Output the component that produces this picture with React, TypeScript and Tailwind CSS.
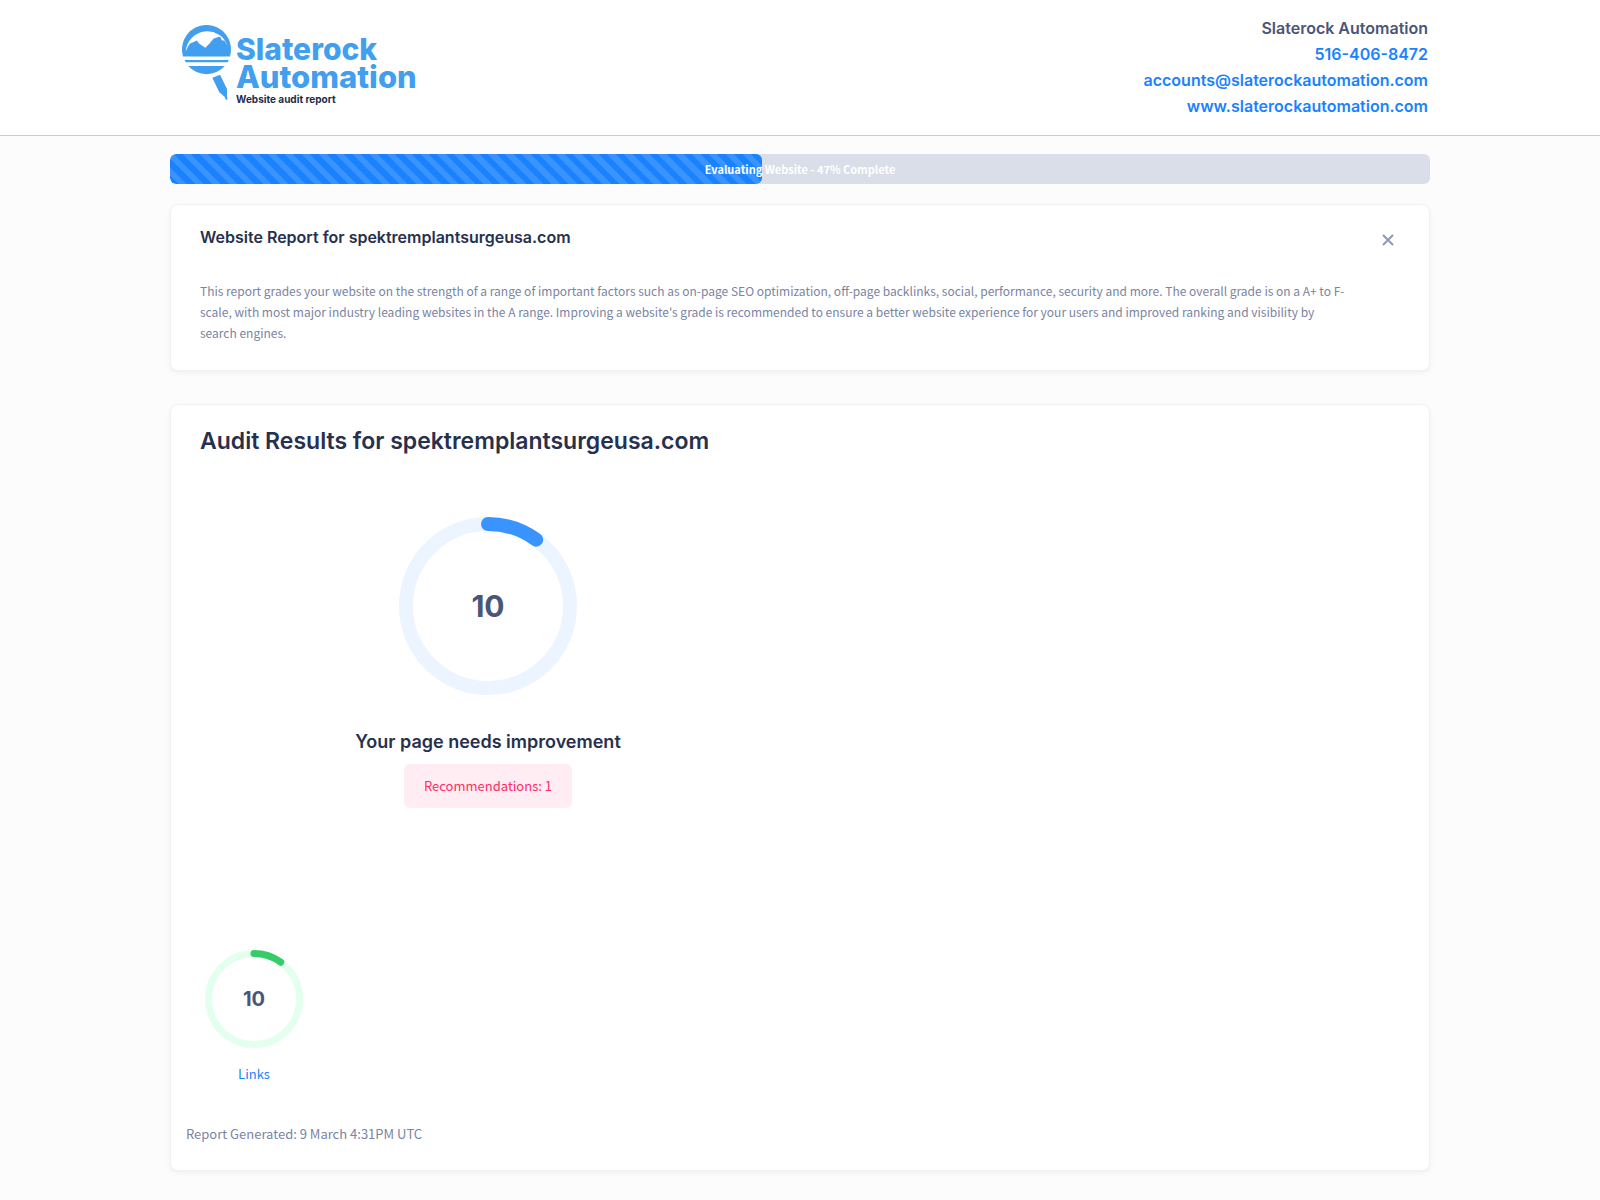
import { type ReactNode } from 'react'

const SITE = 'spektremplantsurgeusa.com'

const CONTACT_LINKS = [
  { label: '516-406-8472', href: 'tel:5164068472' },
  { label: 'accounts@slaterockautomation.com', href: 'mailto:accounts@slaterockautomation.com' },
  { label: 'www.slaterockautomation.com', href: '#website' },
]

// ── Atoms ─────────────────────────────────────────────────────────────────────

function LogoMark() {
  return (
    <svg className="h-20 w-[50px] shrink-0" viewBox="0 0 50 80" fill="#429ff0" aria-hidden="true">
      <path
        fillRule="evenodd"
        d="M1 31.4A24.5 24.5 0 1 1 48 31.4ZM3.8 26.2L6.2 21L8 18.4L11.2 17.2L14.7 15.6L17 18.4L23.3 22.8L28 18L31.3 13.8L37 11.7L38.6 12.2L39.8 15.2L42.6 15.8L45.6 20.8A21.5 21.5 0 0 0 3.8 26.2Z"
      />
      <path d="M2.500 35H46.800L45.600 37.200H3.800Z" />
      <path d="M6.200 41H42.800A24.500 24.500 0 0 1 6.200 41Z" />
      <path d="M30.300 52.700L38 49.700L45 64V71.500L45.400 74.800L43.600 74.400L42.600 71.800L37.300 67.300Z" />
    </svg>
  )
}

interface GaugeProps {
  value: number
  size: number
  stroke: number
  trackClass: string
  barClass: string
  labelClass: string
}

function Gauge({ value, size, stroke, trackClass, barClass, labelClass }: GaugeProps) {
  const c = size / 2
  const r = (size - stroke) / 2
  return (
    <div className="grid place-items-center">
      <svg className="col-start-1 row-start-1" width={size} height={size} viewBox={`0 0 ${size} ${size}`} fill="none" aria-hidden="true">
        <circle className={trackClass} cx={c} cy={c} r={r} strokeWidth={stroke} />
        <circle
          className={barClass}
          cx={c}
          cy={c}
          r={r}
          strokeWidth={stroke}
          strokeLinecap="round"
          pathLength={100}
          strokeDasharray={`${value} 100`}
          transform={`rotate(-90 ${c} ${c})`}
        />
      </svg>
      <div className={`col-start-1 row-start-1 font-[Inter,sans-serif] font-bold text-[#4a5578] ${labelClass}`}>{value}</div>
    </div>
  )
}

function Card({ children, className }: { children: ReactNode; className: string }) {
  return (
    <section className={`rounded-lg border border-[#f0f1f3] bg-white shadow-[0_2px_5px_rgba(0,0,0,0.05)] ${className}`}>
      {children}
    </section>
  )
}

// ── Sections ──────────────────────────────────────────────────────────────────

function Header() {
  return (
    <header className="border-b border-[#ccced1] bg-white font-[Inter,sans-serif]">
      <div className="mx-auto flex max-w-[1260px] items-start justify-between pt-[15px] pr-[2px] pb-4 pl-3">
        <div className="flex items-start gap-1 pt-2.5">
          <LogoMark />
          <div className="pt-2.5 font-extrabold">
            <div className="text-[30px] leading-7 text-[#429ff0]">Slaterock</div>
            <div className="text-[31px] leading-7 text-[#429ff0]">Automation</div>
            <div className="text-[10px] leading-4 font-bold text-[#1d2c4c]">Website audit report</div>
          </div>
        </div>
        <address className="flex flex-col items-end text-base leading-[26px] font-semibold text-[#4a5578] not-italic">
          <span>Slaterock Automation</span>
          {CONTACT_LINKS.map(link => (
            <a key={link.label} href={link.href} className="text-[#1a82ff]">{link.label}</a>
          ))}
        </address>
      </div>
    </header>
  )
}

function ScanProgress({ percent }: { percent: number }) {
  return (
    <div
      className="grid h-[30px] overflow-hidden rounded-md bg-[#dadee9]"
      role="progressbar"
      aria-label="Evaluating Website"
      aria-valuenow={percent}
    >
      <div
        className="col-start-1 row-start-1 rounded-md bg-[#1a82ff] bg-[repeating-linear-gradient(45deg,#1a82ff_0px,#1a82ff_6px,#3a94ff_6px,#3a94ff_12px)]"
        style={{ width: `${percent}%` }}
      />
      <span className="col-start-1 row-start-1 place-self-center text-[11px] leading-[30px] font-bold text-white">
        Evaluating Website - {percent}% Complete
      </span>
    </div>
  )
}

export default function App() {
  return (
    <div className="min-h-screen bg-[#fcfcfc] font-['Noto_Sans_CJK_SC',sans-serif] text-[13px] leading-[21px] text-[#7a84a3]">
      <Header />
      <main className="mx-auto max-w-[1260px] pt-[18px] pb-7">
        <ScanProgress percent={47} />

        <Card className="mt-5 px-[29px] pt-[19px] pb-[27px]">
          <div className="flex items-end justify-between">
            <h2 className="font-[Inter,sans-serif] text-base leading-[26px] font-semibold text-[#27304d]">
              Website Report for {SITE}
            </h2>
            <button type="button" aria-label="Close" className="mr-[2px] p-1 text-[#8f99b3]">
              <svg className="size-3" viewBox="0 0 12 12" stroke="currentColor" strokeWidth="2" aria-hidden="true">
                <path d="M1 1L11 11M11 1L1 11" />
              </svg>
            </button>
          </div>
          <p className="mt-[30px] text-xs leading-[21px]">
            This report grades your website on the strength of a range of important factors such as on-page SEO
            optimization, off-page backlinks, social, performance, security and more. The overall grade is on a A+ to F-
            <br />
            scale, with most major industry leading websites in the A range. Improving a website's grade is
            recommended to ensure a better website experience for your users and improved ranking and visibility by
            <br />
            search engines.
          </p>
        </Card>

        <Card className="mt-[33px] px-[15px] pt-[18px] pb-[26px]">
          <h1 className="px-[14px] font-[Inter,sans-serif] text-[23px] leading-9 font-semibold text-[#27304d]">
            Audit Results for {SITE}
          </h1>

          <div className="flex w-1/2 flex-col items-center pt-[58px] pr-2.5">
            <Gauge value={10} size={178} stroke={14} trackClass="stroke-[#ebf4ff]" barClass="stroke-[#3a94ff]" labelClass="text-[30px] leading-9" />
            <h3 className="mt-[33px] font-[Inter,sans-serif] text-lg leading-7 font-semibold text-[#27304d]">
              Your page needs improvement
            </h3>
            <p className="mt-2 rounded-md bg-[#ffedf3] px-5 py-[11px] leading-[22px] text-[#ff2b62]">
              Recommendations: 1
            </p>
          </div>

          <div className="mt-[142px] flex">
            <a href="#links" className="flex w-[136px] flex-col items-center text-[#1a82ff]">
              <Gauge value={10} size={98} stroke={7} trackClass="stroke-[#e3ffee]" barClass="stroke-[#36cc68]" labelClass="text-xl leading-6" />
              <span className="mt-[15px]">Links</span>
            </a>
          </div>

          <p className="mt-[39px]">Report Generated: 9 March 4:31PM UTC</p>
        </Card>
      </main>
    </div>
  )
}
